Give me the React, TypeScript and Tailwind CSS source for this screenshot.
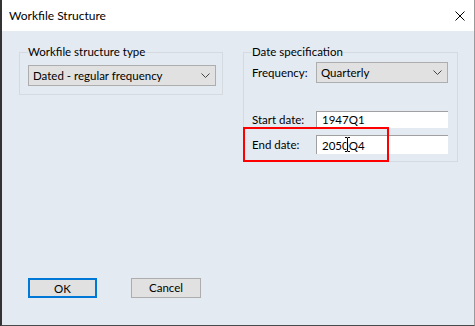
import { ReactNode } from "react"

const font = { fontFamily: '"Segoe UI", Lato, "Noto Sans", sans-serif' }

function Combo({ value, className }: { value: string; className?: string }) {
  return (
    <div
      className={`flex h-[21px] items-center justify-between border border-[#adadad] bg-[#e1e1e1] pl-[4px] pr-[5px] text-[11.5px] text-black ${className ?? ""}`}
    >
      <span className="leading-none">{value}</span>
      <ChevronIcon className="h-[5px] w-[9px] text-[#444]" />
    </div>
  )
}

function Field({ value, className }: { value: string; className?: string }) {
  return (
    <div
      className={`flex items-center border-l border-t border-l-[#a0a0a0] border-t-[#a0a0a0] bg-white pl-[5px] text-[11.5px] text-black ${className ?? ""}`}
    >
      <span className="leading-none">{value}</span>
    </div>
  )
}

function Group({ title, className, children }: { title: string; className?: string; children: ReactNode }) {
  return (
    <fieldset className={`border border-[#d4dae0] ${className ?? ""}`}>
      <legend className="text-[11.5px] leading-[16px] text-black">{title}</legend>
      {children}
    </fieldset>
  )
}

export default function App() {
  return (
    <div
      style={font}
      className="relative flex h-[326px] w-[475px] flex-col overflow-hidden border-b border-l-2 border-r border-b-[#4a4a4a] border-l-[#333] border-r-[#9a9a9a] bg-[#e4eaf2]"
    >
      {/* title bar */}
      <div className="flex h-[31px] shrink-0 items-center justify-between bg-white pl-[7px] pr-[9px]">
        <span className="text-[12px] text-black">Workfile Structure</span>
        <CloseIcon className="h-[10px] w-[10px] text-black" />
      </div>

      <div className="flex flex-1 flex-col pl-[17px] pt-[13px]">
        <div className="flex items-start gap-[20px]">
          <Group title="Workfile structure type" className="w-[204px] pb-[8px] pl-[8px] pr-[6px] pt-[5px]">
            <Combo value="Dated - regular frequency" className="w-[188px]" />
          </Group>

          <Group title="Date specification" className="w-[215px] pb-[7px] pl-[8px] pr-[8px] pt-[2px]">
            <div className="flex items-center">
              <span className="w-[64px] text-[11.5px] text-black">Frequency:</span>
              <Combo value="Quarterly" className="w-[132px]" />
            </div>
            <div className="mt-[28px] flex items-center">
              <span className="w-[64px] text-[11.5px] text-black">Start date:</span>
              <Field value="1947Q1" className="h-[17px] w-[132px]" />
            </div>
            <div className="mt-[7px] flex items-center">
              <span className="w-[64px] text-[11.5px] text-black">End date:</span>
              <Field value="2050Q4" className="h-[19px] w-[132px]" />
            </div>
          </Group>
        </div>

        <div className="mt-auto flex gap-[34px] pb-[27px] pl-[9px]">
          <button className="h-[20px] w-[69px] border-2 border-[#0078d7] bg-[#e1e1e1] text-[11.5px] text-black">
            OK
          </button>
          <button className="h-[20px] w-[70px] border border-[#adadad] bg-[#e1e1e1] text-[11.5px] text-black">
            Cancel
          </button>
        </div>
      </div>

      {/* highlight drawn over the end date row */}
      <div className="absolute left-[241px] top-[127px] h-[35px] w-[146px] border-2 border-[#ff0000]" />

      {/* mouse text cursor */}
      <IBeamIcon className="absolute left-[342px] top-[137px] h-[15px] w-[7px]" />
    </div>
  )
}

function ChevronIcon({ className }: { className?: string }) {
  return (
    <svg className={className} viewBox="0 0 9 5" fill="none" stroke="currentColor" strokeWidth="1">
      <polyline points="0.5 0.5 4.5 4.5 8.5 0.5" />
    </svg>
  )
}

function CloseIcon({ className }: { className?: string }) {
  return (
    <svg className={className} viewBox="0 0 10 10" fill="none" stroke="currentColor" strokeWidth="1">
      <path d="M0.5 0.5 L9.5 9.5 M9.5 0.5 L0.5 9.5" />
    </svg>
  )
}

function IBeamIcon({ className }: { className?: string }) {
  return (
    <svg className={className} viewBox="0 0 7 15" fill="none">
      <path d="M1 0.5 H3 L3.5 1 L4 0.5 H6 M3.5 1 V14 M1 14.5 H3 L3.5 14 L4 14.5 H6" stroke="#fff" strokeWidth="2" />
      <path d="M1 0.5 H3 L3.5 1 L4 0.5 H6 M3.5 1 V14 M1 14.5 H3 L3.5 14 L4 14.5 H6" stroke="#000" strokeWidth="1" />
    </svg>
  )
}
